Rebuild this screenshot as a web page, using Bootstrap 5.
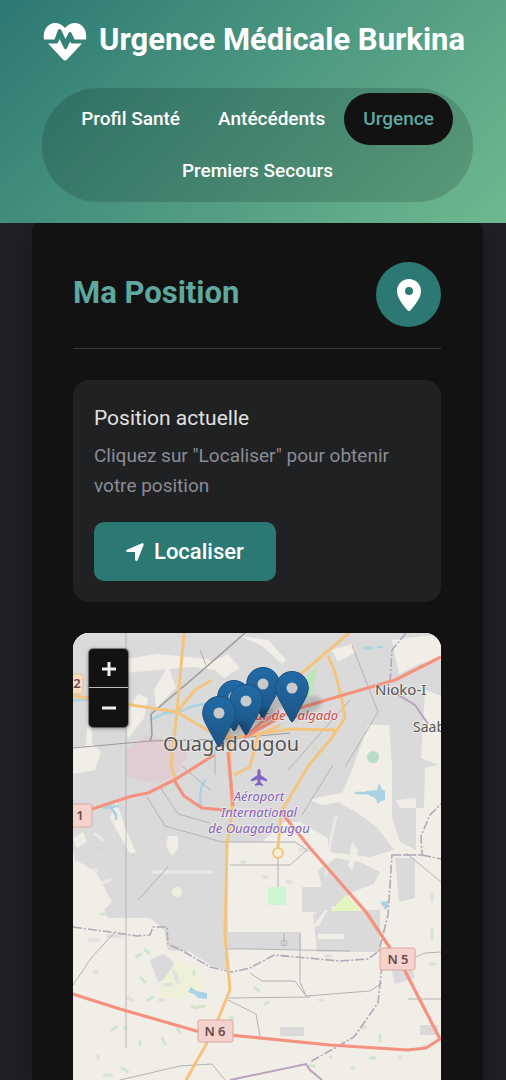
<!DOCTYPE html>
<html lang="fr">
<head>
<meta charset="utf-8">
<meta name="viewport" content="width=device-width, initial-scale=1">
<title>Urgence Médicale Burkina</title>
<link rel="stylesheet" href="https://cdn.jsdelivr.net/npm/bootstrap@5.3.0/dist/css/bootstrap.min.css">
<style>
  :root { --teal: #2c7873; --teal-light: #5fa8a0; --surface: #121212; --panel: #202122; }
  body { background: #202125; font-family: Roboto, "Liberation Sans", sans-serif; color: #e0e0e0; }
  .app-header { background: linear-gradient(135deg, #2c7873, #6fb98f); padding: 19px 33px 21px 42px; z-index: 2; }
  .brand-title { font-size: 31px; line-height: 40px; font-weight: 700; gap: 12px; margin-bottom: 24px; white-space: nowrap; }
  .tabs-pill { background: rgba(0,0,0,.15); border-radius: 56px; padding: 5px; }
  .tabs-pill .nav-link { color: #fff; font-size: 19px; line-height: 28px; font-weight: 500; padding: 12px 19px; border-radius: 26px; }
  .tabs-pill .nav-link.active { background: var(--surface); color: var(--teal-light); }
  .page-body { padding: 0 23px 0 32px; }
  .position-panel { background: var(--surface); border-radius: 12px 12px 0 0; margin-top: -3px; padding: 42px 42px 0 41px; box-shadow: 0 10px 30px rgba(0,0,0,.3); }
  .panel-head { padding-bottom: 21px; border-bottom: 1px solid #3b3b3b; margin-bottom: 31px; }
  .panel-head h2 { font-size: 31px; line-height: 40px; font-weight: 700; color: var(--teal-light); }
  .round-icon { width: 65px; height: 65px; background: var(--teal); }
  .info-box { background: var(--panel); border-radius: 16px; padding: 21px; margin-bottom: 31px; }
  .info-box h3 { font-size: 21px; line-height: 34px; font-weight: 400; margin-bottom: 6px; }
  .info-box p { font-size: 19px; line-height: 30px; color: #8a8c96; margin-bottom: 21px; }
  .btn-locate, .btn-locate:hover { background: var(--teal); color: #fff; border: 0; border-radius: 10px; font-size: 22px; line-height: 33px; font-weight: 500; padding: 13px 32px; gap: 10px; }
  .map-frame { border-radius: 16px 16px 0 0; background: #f1eee8; min-height: 400px; }
  .map-frame .map-art { position: absolute; width: 100%; height: 100%; }
  .zoom-control { position: absolute; top: 16px; left: 16px; border-radius: 4px; box-shadow: 0 0 0 1px rgba(0,0,0,.35), 0 1px 4px rgba(0,0,0,.5); }
  .zoom-control button { width: 39px; height: 39px; background: var(--surface); color: #eee; border: 0; padding: 0; }
  .zoom-control button:first-child { border-bottom: 1px solid #bbb; }
  .map-label { font-family: "Noto Sans", "Open Sans", sans-serif; paint-order: stroke; stroke: #f4f2ee; stroke-opacity: .7; stroke-width: 2px; stroke-linejoin: round; }
</style>
</head>
<body class="min-vh-100 d-flex flex-column">
<header class="app-header position-relative">
  <h1 class="brand-title d-flex align-items-center text-white">
    <svg class="flex-shrink-0" width="45" height="45" viewBox="0 0 45 45" fill="#fff" aria-hidden="true">
      <path d="M2 20.500C.5 11 6 4 13 4c4 0 7 1.500 10 5 3-3.500 6-5 10-5 7 0 12.500 7 11 16.500H32.500L29.500 14c-.6-1.200-2.400-1.200-3 0l-3 6-4.300-9c-.6-1.300-2.600-1.300-3.200.1L12.500 20.500z"/>
      <path d="M6 24.500h8.500c.7 0 1.300-.4 1.600-1L17.500 20l4.600 9.300c.6 1.200 2.200 1.200 2.800 0l3.200-6.800.5 1.200c.3.500.9.800 1.500.8H40L25 40.500c-1.300 1.300-2.700 1.300-4 0z"/>
    </svg>
    <span class="pb-1">Urgence Médicale Burkina</span>
  </h1>
  <nav class="tabs-pill nav justify-content-center" aria-label="Sections">
    <a class="nav-link" href="#profil">Profil Santé</a>
    <a class="nav-link" href="#antecedents">Antécédents</a>
    <a class="nav-link active" aria-current="page" href="#urgence">Urgence</a>
    <a class="nav-link" href="#secours">Premiers Secours</a>
  </nav>
</header>
<main class="page-body flex-grow-1 d-flex flex-column">
  <section class="position-panel flex-grow-1 d-flex flex-column">
    <div class="panel-head d-flex justify-content-between align-items-center">
      <h2 class="mb-1">Ma Position</h2>
      <span class="round-icon rounded-circle d-flex align-items-center justify-content-center">
        <svg width="24" height="32" viewBox="0 0 24 32" aria-hidden="true"><path fill="#fff" fill-rule="evenodd" d="M12 0C5.200 0 0 5.200 0 12c0 7.200 6.500 14.500 10.500 19.300a2 2 0 0 0 3 0C17.500 26.500 24 19.200 24 12 24 5.200 18.800 0 12 0zm0 8a4 4 0 1 1 0 8 4 4 0 0 1 0-8z"/></svg>
      </span>
    </div>
    <div class="info-box">
      <h3>Position actuelle</h3>
      <p>Cliquez sur "Localiser" pour obtenir votre position</p>
      <button type="button" class="btn btn-locate d-inline-flex align-items-center">
        <svg width="18" height="18" viewBox="0 0 18 18" aria-hidden="true"><path fill="#fff" d="M1 6.700 16 .3c1-.4 2 .6 1.600 1.600L11.700 17c-.6 1.500-2.700 1.100-2.700-.5V9H1.500C-.1 9-.5 7.300 1 6.700z"/></svg>
        <span>Localiser</span>
      </button>
    </div>
    <div class="map-frame position-relative overflow-hidden flex-grow-1">
      <svg class="map-art" viewBox="73 633 368 447" preserveAspectRatio="xMidYMin slice" role="img" aria-label="Carte de Ouagadougou">
        <rect x="73" y="633" width="368" height="447" fill="#f1eee8"/>
        <!-- built-up areas -->
        <g fill="#dadadb">
          <path d="M73 633H441V764L425 768 424 808H416V850L400 842 392 818 392 765 389 725 368 725 352 770 342 793 325 796 310 800 322 805 340 802 362 816 378 828 394 850 370 857 328 852 328 838 300 822 284 822 262 842H228V872L212 880 180 874 138 878 142 868 172 862 190 868 228 862V970L212 966 190 952 168 950 164 930 150 918 108 918 100 900 90 870 76 865 73 850z"/>
          <path d="M228 932H301V949H228zM302 887H332V912H302zM318 870l18-12 24 4 20 10-6 12-22 8-16 16-12-8zM313 915l7-5h60v42H317zM395 858h20v40l-16 4z"/>
          <path d="M280 1027h24v9h-24zM391 968l18-6 6 16-20 6zM420 1025h18v10h-18zM150 960l14-6 10 8-4 16-12 4z"/>
        </g>
        <!-- open ground inside the city -->
        <g fill="#f0eee6">
          <path d="M118 660l40-6 50 5 14 12-30-4-68 6zM168 666l8 22-20 20-2-18zM73 748l20-4 8 8-6 18-22 4zM88 700l4 0 0 48-6 0zM138 694l10 4-4 20-16 20-4-20zM240 636l28 4 18 20-4 4-20-18zM392 640l49-6v26l-22 4-20 10zM332 650l20-6 4 8-18 10zM208 664l20-10 12 14-16 10zM116 800l10 30 10 22-6 2-20-36zM168 836l10 0 0 12-6 8-6-10zM76 860l20 12 16 30-16 16-23-4zM73 838l10-6 4 10-10 6zM425 690l16 6v70l-20-8zM396 800l20-2v10h-16zM352 842l6 8-6 20-4-4z"/>
          <path d="M313 926l12-16 3 0-9 16zM318 934h26v5h-26z"/>
        </g>
        <circle cx="177" cy="892" r="5" fill="#eef0dc"/>
        <path d="M126 750l20-14 22 4 20 14-12 22-20 8-30-8z" fill="#e0cdd2"/>
        <path d="M268 887h18v18h-18z" fill="#cdf5d2"/>
        <path d="M331 911l15-16 15 16z" fill="#e4f7c0"/>
        <path d="M306 676l11-10-4 26-6 10z" fill="#bfe6bb"/>
        <circle cx="373" cy="757" r="6" fill="#b9dcc8"/>
        <path d="M178 960l18 8 8 20-20 10-24 0 0-14z" fill="#eef0da"/>
        <!-- scattered vegetation -->
        <g fill="none" stroke-linecap="round" opacity=".7">
          <path stroke="#c3e2c0" stroke-width="3" d="M132 648h4M101 914h4M136 957l5-3M145 950l4 3M141 978l4 4M112 1030l4-3M125 1028h1M177 1028l3 4M162 1038l3 6M192 1006l4 2 8-2M194 971v3M148 1000l5-3M98 1056v2M104 1075h8M122 1068l6 4M140 1042v3M230 1018h3M255 988l4 3M265 1004l3-2M94 972h3M96 848h6M171 789h3M242 862h3M314 748h2M432 930v8M430 964h5M380 1035v6M362 1027h3M344 1042v3M370 1058h5M352 1068h2M400 1056v2M330 1057h1M424 1046h3M320 1000h2M310 1066h4"/>
          <path stroke="#dcdcdf" stroke-width="4" d="M158 958h8M174 972l4 10M128 998l4 2M160 1000h4M108 936h12M90 940h8M300 850h10M264 877h3M287 882h4M326 956h4M432 895v6M165 985h6"/>
          <path stroke="#f0eee6" stroke-width="3" d="M336 816l-6 28-4 30M340 802l30 16 30 34M284 836l20 8M152 872h60M80 826l12-8M95 834l8 6M85 870h12M100 884l10-4"/>
        </g>
        <!-- water -->
        <g fill="none" stroke="#a9d3e2" stroke-width="2.500" stroke-linecap="round">
          <path d="M151 720l14-7 14-1 14-6 12-2M73 700h14M205 780q-7 12-4 24M108 803l8 12 0 4M104 808l14-2M356 793h10M364 648h8M378 647h4"/>
        </g>
        <path fill="#a9d3e2" d="M366 791l11-1 2-7 3 6 3 2v9l-4 1-3 3-3-6-9-4zM191 987l5 4 11 2v6l-9-1-4-4-6-2zM380 902l8-1v6l-3 3-2-4z"/>
        <!-- railways, boundaries and minor roads -->
        <g fill="none" stroke="#b3b2b6" stroke-width="1">
          <path d="M126 633V1048" stroke="#b5b5b8"/>
          <path d="M73 748L150 741 228 739 290 733" stroke="#999"/>
          <path d="M245 633L197 675 151 714 152 735 150 741" stroke="#999" stroke-width="1.500"/>
          <path d="M73 985L92 957 116 931M147 797L165 826 222 842H295L307 850 290 865H230M160 787L178 814 210 823M278 858V887M333 765L302 815M288 770L350 700M352 645L378 712 345 767M168 867L138 900M228 949H250L350 951M300 933V982L306 996M250 973L262 981H295L306 996 370 991 382 983M228 998L310 997M228 1000L256 1014 260 1036M120 1080L180 1066 212 1064 225 1080M284 933V946M408 960L425 953 441 952M408 999H441M406 853L441 882M200 650L206 665M182 766L210 790M215 745V775M230 730V775"/>
          <circle cx="284" cy="943" r="3"/>
        </g>
        <g fill="none" stroke="#b3a7b9" stroke-width="1.600">
          <path stroke-dasharray="9 2 2 2" d="M73 927L110 932 137 936 150 935 153 927 167 927 168 944 181 950 210 967 232 972 250 968 274 955 340 961 368 959 379 951 388 915 392 855 422 855 421 836 430 815 441 804M392 855H422L441 859M382 965L378 1003 354 1037 310 1062M406 633L392 650 390 683"/>
          <path d="M390 690L415 705 428 724M230 1080L306 1064 310 1070 322 1080" stroke="#b9a2bd" stroke-width="2"/>
        </g>
        <!-- secondary roads -->
        <g fill="none" stroke="#f5c47c" stroke-width="3" stroke-linejoin="round">
          <path d="M184 633L177 712 171 765 174 775 178 780M73 696L177 712 210 732 231 738 290 729 335 730M177 712L195 690 212 680M349 633L303 672 250 708M328 656L335 672 342 700 345 718 330 740 309 765 281 812 278 848M229 733L232 812 227 845 225 935 230 990 212 1034 186 1080M234 775L250 767 258 735 280 725"/>
        </g>
        <circle cx="278" cy="853" r="5" fill="#f8efd8" stroke="#f3c57c" stroke-width="2"/>
        <!-- trunk roads -->
        <g fill="none" stroke="#f5927f" stroke-width="3.200" stroke-linejoin="round">
          <path d="M441 657L395 680 340 696 293 710 245 737M92 809L132 796 148 793 176 779 214 755M174 780L184 796 202 808 235 811M228 752L233 806M281 812L310 848 366 912 404 969 440 1039 426 1048 408 1050 330 1045 200 1032 120 1009 73 994M244 738L262 722 280 712"/>
        </g>
        <g fill="#f5d3cc" stroke="#dba79f">
          <rect x="198" y="1020" width="35" height="22" rx="2"/>
          <rect x="380" y="948" width="35" height="22" rx="2"/>
          <rect x="66" y="804" width="26" height="23" rx="2"/>
          <rect x="66" y="674" width="17" height="20" rx="2" fill="#f8dcc2" stroke="#e0b898"/>
        </g>
        <g font-family="Noto Sans, sans-serif" font-size="13" font-weight="600" fill="#684a4a" text-anchor="middle">
          <text x="215" y="1036">N 6</text>
          <text x="398" y="964">N 5</text>
          <text x="80" y="820">1</text>
          <text x="77" y="688">2</text>
        </g>
        <g class="map-label" fill="#555">
          <text x="231" y="751" font-size="20" text-anchor="middle">Ouagadougou</text>
          <text x="375" y="695" font-size="15">Nioko-I</text>
          <text x="413" y="732" font-size="14">Saab</text>
        </g>
        <text class="map-label" x="338" y="720" font-size="13" font-style="italic" text-anchor="end" fill="#c9474d">Cœur de Dalgado</text>
        <path transform="translate(259 777)" fill="#8461c4" d="M0-8c1.200 0 1.600 1.500 1.600 3V-2L8 2.500V4.500L1.600 2.500V5.500L4 7.500V9L0 8-4 9V7.500L-1.600 5.500V2.500L-8 4.500V2.500L-1.600-2V-5c0-1.500.4-3 1.600-3z"/>
        <g class="map-label" font-size="13" font-style="italic" text-anchor="middle" fill="#8461b8">
          <text x="259" y="801">Aéroport</text>
          <text x="259" y="817">International</text>
          <text x="259" y="833">de Ouagadougou</text>
        </g>
        <!-- markers -->
        <defs>
          <filter id="soft"><feGaussianBlur stdDeviation="2"/></filter>
          <linearGradient id="pinfill" x1="0" y1="0" x2="0" y2="1"><stop offset="0" stop-color="#226ba6"/><stop offset="1" stop-color="#1c5485"/></linearGradient>
          <g id="pin">
            <path d="M0 34C2 20 10 10 20 8s14 8 4 14z" fill="#000" opacity=".16" filter="url(#soft)"/>
            <path d="M0-16.500C9.200-16.500 16.300-9.200 16.300 0 16.300 5 14 9.500 11.500 14L1.200 33Q0 35-1.200 33L-11.500 14C-14 9.500-16.300 5-16.300 0-16.300-9.200-9.200-16.500 0-16.500z" fill="url(#pinfill)" stroke="#1d5080"/>
            <circle r="5.500" fill="#c9cacc"/>
          </g>
        </defs>
        <use href="#pin" x="263" y="684"/>
        <use href="#pin" x="292" y="688"/>
        <use href="#pin" x="234" y="697"/>
        <use href="#pin" x="246" y="701"/>
        <use href="#pin" x="219" y="713"/>
      </svg>
      <div class="zoom-control d-flex flex-column overflow-hidden">
        <button type="button" aria-label="Zoom avant"><svg width="16" height="16" viewBox="0 0 16 16"><path d="M8 1v14M1 8h14" stroke="#eee" stroke-width="3"/></svg></button>
        <button type="button" aria-label="Zoom arrière"><svg width="16" height="16" viewBox="0 0 16 16"><path d="M1 8h14" stroke="#eee" stroke-width="3"/></svg></button>
      </div>
    </div>
  </section>
</main>
<script src="https://cdn.jsdelivr.net/npm/bootstrap@5.3.0/dist/js/bootstrap.bundle.min.js"></script>
</body>
</html>
